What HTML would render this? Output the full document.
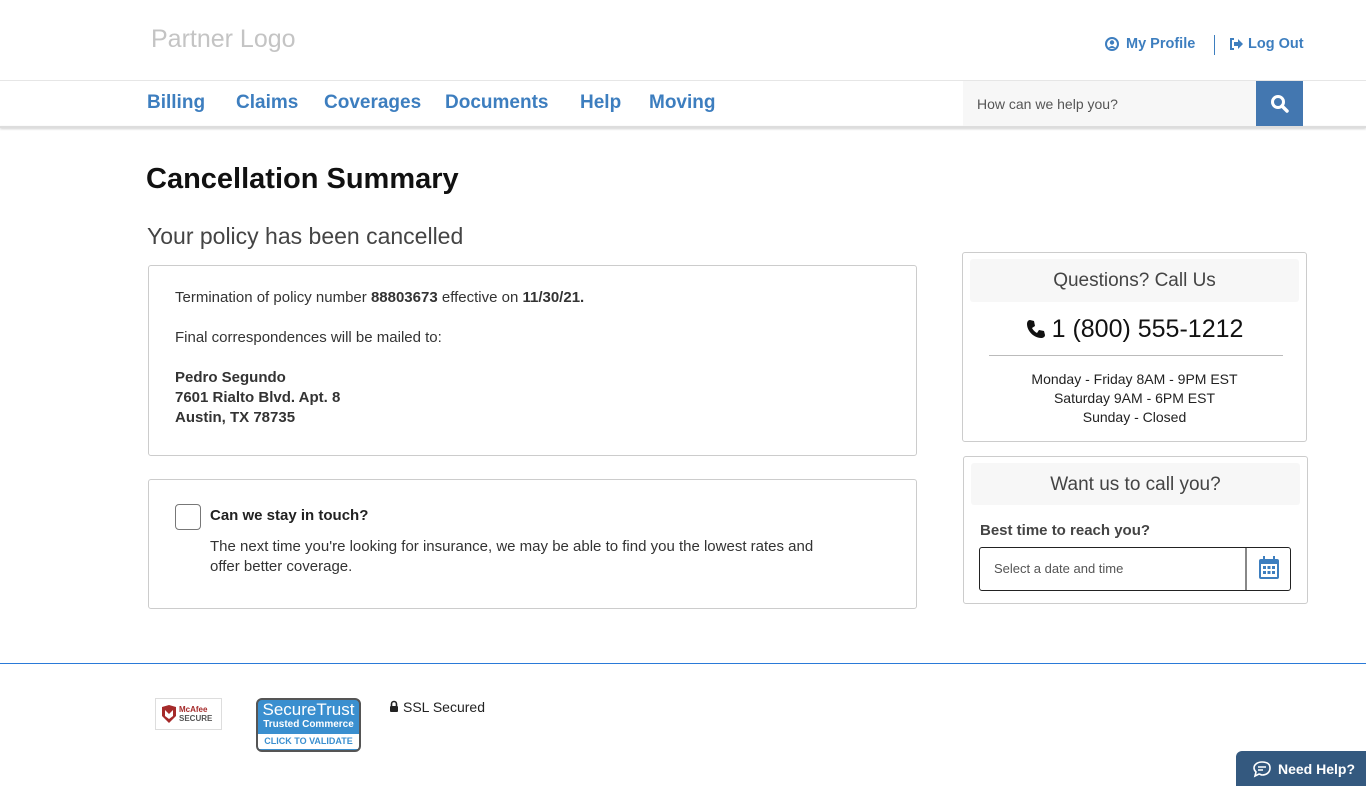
<!DOCTYPE html>
<html><head><meta charset="utf-8"><style>
*{box-sizing:border-box;margin:0;padding:0}
body{width:1366px;height:786px;overflow:hidden;background:#fff;font-family:"Liberation Sans",sans-serif;color:#333;position:relative}
.abs{position:absolute}
.blue{color:#3d7ebf}
</style></head><body>
<div class="abs" style="left:151px;top:25px;font-size:25px;color:#c4c4c4">Partner Logo</div>
<div class="abs blue" style="left:1105px;top:36px;font-size:14.5px;font-weight:bold;display:flex;align-items:center;gap:7px">
<svg width="14" height="14" viewBox="0 0 14 14"><circle cx="7" cy="7" r="6" fill="none" stroke="#3d7ebf" stroke-width="2"/><circle cx="7" cy="5.5" r="2.2" fill="#3d7ebf"/><path d="M3.5 11 Q7 7 10.5 11" fill="#3d7ebf"/></svg>My Profile</div>
<div class="abs" style="left:1214px;top:35px;width:1px;height:20px;background:#3d7ebf"></div>
<div class="abs blue" style="left:1229px;top:36px;font-size:14.5px;font-weight:bold;display:flex;align-items:center;gap:5px">
<svg width="14" height="12" viewBox="0 0 14 12"><path d="M5 1H2v10h3" fill="none" stroke="#3d7ebf" stroke-width="2"/><path d="M5 4h4V1l5 5-5 5V8H5z" fill="#3d7ebf"/></svg>Log Out</div>
<div class="abs" style="left:0;top:80px;width:1366px;height:1px;background:#e6e6e6"></div>
<div class="abs" style="left:0;top:126px;width:1366px;height:2px;background:#ddd;box-shadow:0 1px 2px #ccc"></div>
<div class="abs blue" style="top:92px;left:0;font-size:19px;font-weight:bold">
<span class="abs" style="left:147px">Billing</span><span class="abs" style="left:236px">Claims</span><span class="abs" style="left:324px">Coverages</span><span class="abs" style="left:445px">Documents</span><span class="abs" style="left:580px">Help</span><span class="abs" style="left:649px">Moving</span></div>
<div class="abs" style="left:963px;top:81px;width:293px;height:45px;background:#f7f7f7;font-size:14px;color:#555;padding:15px 14px">How can we help you?</div>
<div class="abs" style="left:1256px;top:81px;width:47px;height:45px;background:#4377b0;display:flex;align-items:center;justify-content:center">
<svg width="20" height="20" viewBox="0 0 20 20"><circle cx="8" cy="8" r="5.5" fill="none" stroke="#fff" stroke-width="3"/><path d="M12 12l5 5" stroke="#fff" stroke-width="3.5" stroke-linecap="round"/></svg></div>
<div class="abs" style="left:146px;top:163px;font-size:29px;font-weight:bold;color:#111">Cancellation Summary</div>
<div class="abs" style="left:147px;top:223px;font-size:23px;color:#444">Your policy has been cancelled</div>
<div class="abs" style="left:148px;top:265px;width:769px;height:191px;border:1px solid #ccc;border-radius:3px;font-size:15px;color:#333;padding:22px 26px;line-height:20px">
Termination of policy number <b>88803673</b> effective on <b>11/30/21.</b><br><div style="height:20px"></div>Final correspondences will be mailed to:<div style="height:20px"></div><b>Pedro Segundo<br>7601 Rialto Blvd. Apt. 8<br>Austin, TX 78735</b></div>
<div class="abs" style="left:148px;top:479px;width:769px;height:130px;border:1px solid #ccc;border-radius:3px"></div>
<div class="abs" style="left:175px;top:504px;width:26px;height:26px;border:1px solid #777;border-radius:4px"></div>
<div class="abs" style="left:210px;top:507px;font-size:15px;font-weight:bold;color:#222">Can we stay in touch?</div>
<div class="abs" style="left:210px;top:537px;width:630px;font-size:15px;line-height:20px;color:#333">The next time you're looking for insurance, we may be able to find you the lowest rates and offer better coverage.</div>
<div class="abs" style="left:962px;top:252px;width:345px;height:190px;border:1px solid #ccc;border-radius:3px"></div>
<div class="abs" style="left:970px;top:259px;width:329px;height:43px;background:#f7f7f7;border-radius:3px;text-align:center;font-size:19px;line-height:44px;color:#444">Questions? Call Us</div>
<div class="abs" style="left:962px;top:315px;width:345px;text-align:center;font-size:25px;color:#111"><svg width="20" height="20" viewBox="0 0 20 20" style="vertical-align:-2px;margin-right:6px"><path d="M4 1l4 1 1 5-3 2c1 2 3 4 5 5l2-3 5 1 1 4c0 2-2 3-4 3C8 19 1 12 1 5c0-2 1-4 3-4z" fill="#111"/></svg>1 (800) 555-1212</div>
<div class="abs" style="left:989px;top:355px;width:294px;height:1px;background:#bbb"></div>
<div class="abs" style="left:962px;top:370px;width:345px;text-align:center;font-size:14px;line-height:19px;color:#222">Monday - Friday 8AM - 9PM EST<br>Saturday 9AM - 6PM EST<br>Sunday - Closed</div>
<div class="abs" style="left:963px;top:456px;width:345px;height:148px;border:1px solid #ccc;border-radius:3px"></div>
<div class="abs" style="left:971px;top:463px;width:329px;height:42px;background:#f7f7f7;border-radius:3px;text-align:center;font-size:19px;line-height:43px;color:#444">Want us to call you?</div>
<div class="abs" style="left:980px;top:522px;font-size:15px;font-weight:bold;color:#444">Best time to reach you?</div>
<div class="abs" style="left:979px;top:547px;width:312px;height:44px;border:1px solid #222;border-radius:3px;font-size:13px;color:#555;padding:13px 14px">Select a date and time</div>
<div class="abs" style="left:1245px;top:548px;width:2px;height:42px;background:#888"></div>
<svg class="abs" style="left:1258px;top:555px" width="22" height="25" viewBox="0 0 22 25"><rect x="1" y="4" width="20" height="20" rx="2" fill="#3d7ebf"/><rect x="3" y="9" width="16" height="13" fill="#fff"/><rect x="5" y="1" width="2" height="5" fill="#3d7ebf"/><rect x="15" y="1" width="2" height="5" fill="#3d7ebf"/><g fill="#3d7ebf"><rect x="5" y="11" width="3" height="3"/><rect x="9.5" y="11" width="3" height="3"/><rect x="14" y="11" width="3" height="3"/><rect x="5" y="16" width="3" height="3"/><rect x="9.5" y="16" width="3" height="3"/><rect x="14" y="16" width="3" height="3"/></g></svg>
<div class="abs" style="left:0;top:663px;width:1366px;height:1px;background:#2a7ad8"></div>
<div class="abs" style="left:155px;top:698px;width:67px;height:32px;border:1px solid #ddd;display:flex;align-items:center;gap:2px;padding-left:5px">
<svg width="16" height="20" viewBox="0 0 16 20"><path d="M1 3l7-2 7 2v9l-7 7-7-7z" fill="#a52a2a"/><path d="M4 6v6l4 3 4-3V6l-4 4z" fill="#fff"/></svg>
<div style="font-size:8px;font-weight:bold;line-height:9px"><span style="color:#a52a2a">McAfee</span><br><span style="color:#555">SECURE</span></div></div>
<div class="abs" style="left:256px;top:698px;width:105px;height:54px;border:2px solid #555;border-radius:6px;background:#3a8fcf;overflow:hidden;text-align:center;color:#fff">
<div style="font-size:17px;line-height:19px">SecureTrust</div><div style="font-size:10px;font-weight:bold;line-height:12px">Trusted Commerce</div>
<div style="background:#fff;color:#3a8fcf;font-size:9px;font-weight:bold;line-height:15px;margin-top:3px">CLICK TO VALIDATE</div></div>
<div class="abs" style="left:389px;top:699px;font-size:14px;color:#222"><svg width="10" height="12" viewBox="0 0 10 12" style="margin-right:4px"><path d="M2.5 6V4a2.5 2.5 0 015 0v2" fill="none" stroke="#222" stroke-width="1.6"/><rect x="1" y="6" width="8" height="6" rx="1" fill="#222"/></svg>SSL Secured</div>
<div class="abs" style="left:1236px;top:751px;width:130px;height:35px;background:#34597f;border-radius:6px 0 0 0;color:#fff;font-size:14px;font-weight:bold;display:flex;align-items:center;gap:6px;padding-left:16px">
<svg width="20" height="18" viewBox="0 0 20 18"><path d="M10 2C5 2 2 5 2 8c0 2 1 3 2 4l-1 4 4-2c1 0 2 1 3 1 5 0 8-3 8-7s-3-6-8-6z" fill="none" stroke="#fff" stroke-width="1.6"/><path d="M6 7h8M6 10h5" stroke="#fff" stroke-width="1.6"/></svg>Need Help?</div>
</body></html>
